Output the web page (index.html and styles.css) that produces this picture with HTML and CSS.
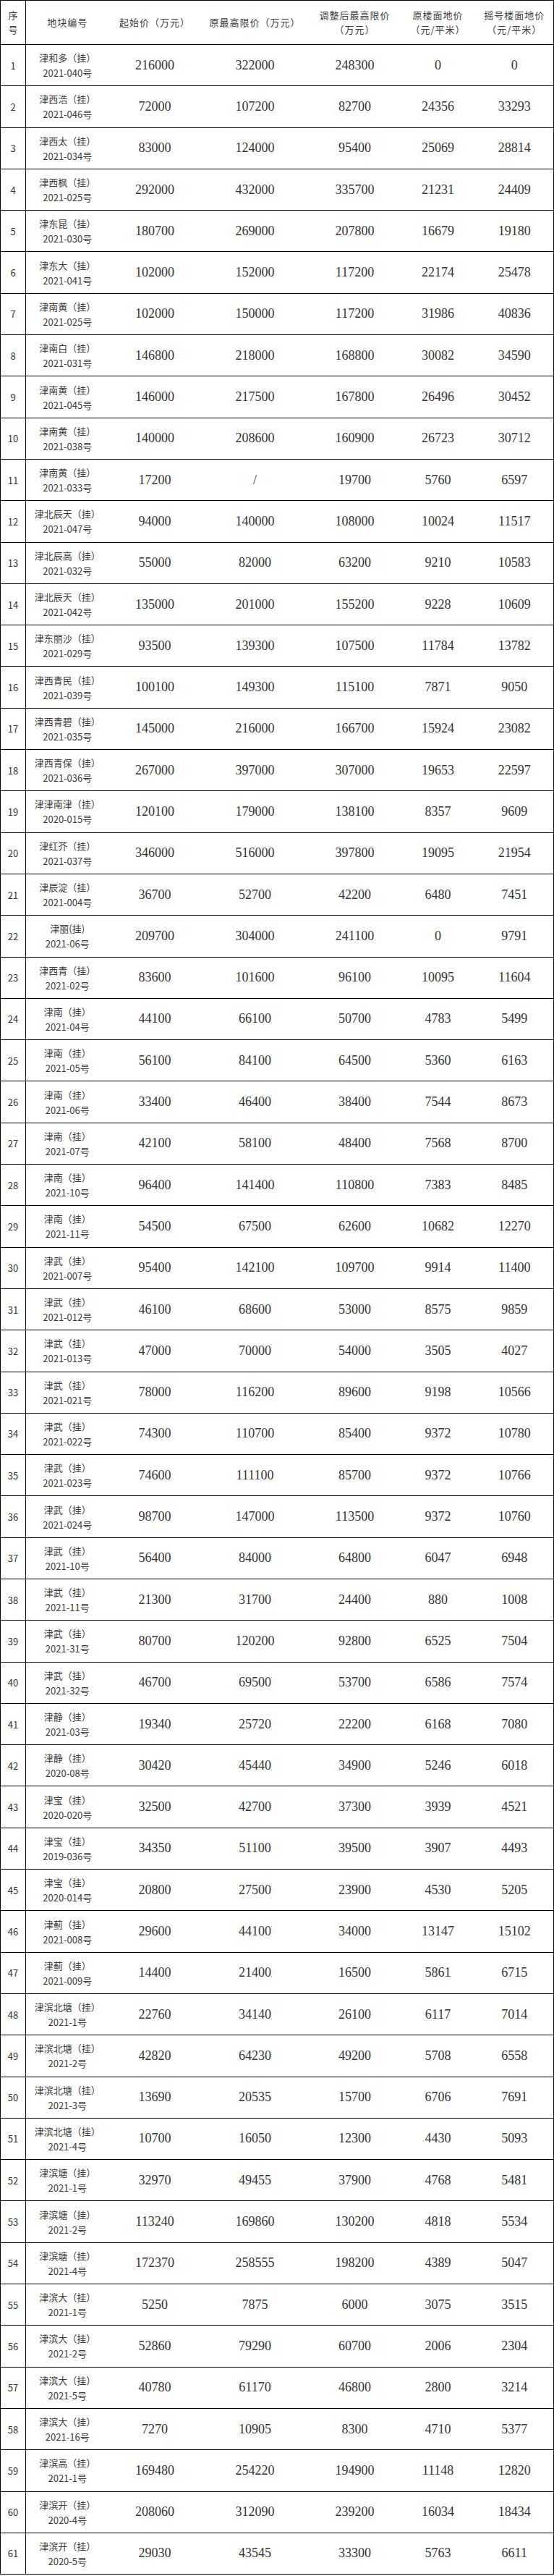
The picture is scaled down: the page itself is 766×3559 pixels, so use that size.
FILE: index.html
```html
<!DOCTYPE html>
<html lang="zh-CN">
<head>
<meta charset="utf-8">
<title>地块价格表</title>
<link rel="stylesheet" href="styles.css">
</head>
<body>
<table class="grid">
<colgroup>
<col class="c-no"><col class="c-id"><col class="c-start"><col class="c-max"><col class="c-adj"><col class="c-floor"><col class="c-lot">
</colgroup>
<thead>
<tr class="head">
<th class="no">序<br>号</th>
<th>地块编号</th>
<th>起始价（万元）</th>
<th>原最高限价（万元）</th>
<th>调整后最高限价<br>（万元）</th>
<th>原楼面地价<br>（元/平米）</th>
<th>摇号楼面地价<br>（元/平米）</th>
</tr>
</thead>
<tbody>
<tr><td class="no">1</td><td class="id">津和多（挂）<br>2021-040号</td><td>216000</td><td>322000</td><td>248300</td><td>0</td><td>0</td></tr>
<tr><td class="no">2</td><td class="id">津西浩（挂）<br>2021-046号</td><td>72000</td><td>107200</td><td>82700</td><td>24356</td><td>33293</td></tr>
<tr><td class="no">3</td><td class="id">津西太（挂）<br>2021-034号</td><td>83000</td><td>124000</td><td>95400</td><td>25069</td><td>28814</td></tr>
<tr><td class="no">4</td><td class="id">津西枫（挂）<br>2021-025号</td><td>292000</td><td>432000</td><td>335700</td><td>21231</td><td>24409</td></tr>
<tr><td class="no">5</td><td class="id">津东昆（挂）<br>2021-030号</td><td>180700</td><td>269000</td><td>207800</td><td>16679</td><td>19180</td></tr>
<tr><td class="no">6</td><td class="id">津东大（挂）<br>2021-041号</td><td>102000</td><td>152000</td><td>117200</td><td>22174</td><td>25478</td></tr>
<tr><td class="no">7</td><td class="id">津南黄（挂）<br>2021-025号</td><td>102000</td><td>150000</td><td>117200</td><td>31986</td><td>40836</td></tr>
<tr><td class="no">8</td><td class="id">津南白（挂）<br>2021-031号</td><td>146800</td><td>218000</td><td>168800</td><td>30082</td><td>34590</td></tr>
<tr><td class="no">9</td><td class="id">津南黄（挂）<br>2021-045号</td><td>146000</td><td>217500</td><td>167800</td><td>26496</td><td>30452</td></tr>
<tr><td class="no">10</td><td class="id">津南黄（挂）<br>2021-038号</td><td>140000</td><td>208600</td><td>160900</td><td>26723</td><td>30712</td></tr>
<tr><td class="no">11</td><td class="id">津南黄（挂）<br>2021-033号</td><td>17200</td><td>/</td><td>19700</td><td>5760</td><td>6597</td></tr>
<tr><td class="no">12</td><td class="id">津北辰天（挂）<br>2021-047号</td><td>94000</td><td>140000</td><td>108000</td><td>10024</td><td>11517</td></tr>
<tr><td class="no">13</td><td class="id">津北辰高（挂）<br>2021-032号</td><td>55000</td><td>82000</td><td>63200</td><td>9210</td><td>10583</td></tr>
<tr><td class="no">14</td><td class="id">津北辰天（挂）<br>2021-042号</td><td>135000</td><td>201000</td><td>155200</td><td>9228</td><td>10609</td></tr>
<tr><td class="no">15</td><td class="id">津东丽沙（挂）<br>2021-029号</td><td>93500</td><td>139300</td><td>107500</td><td>11784</td><td>13782</td></tr>
<tr><td class="no">16</td><td class="id">津西青民（挂）<br>2021-039号</td><td>100100</td><td>149300</td><td>115100</td><td>7871</td><td>9050</td></tr>
<tr><td class="no">17</td><td class="id">津西青碧（挂）<br>2021-035号</td><td>145000</td><td>216000</td><td>166700</td><td>15924</td><td>23082</td></tr>
<tr><td class="no">18</td><td class="id">津西青保（挂）<br>2021-036号</td><td>267000</td><td>397000</td><td>307000</td><td>19653</td><td>22597</td></tr>
<tr><td class="no">19</td><td class="id">津津南津（挂）<br>2020-015号</td><td>120100</td><td>179000</td><td>138100</td><td>8357</td><td>9609</td></tr>
<tr><td class="no">20</td><td class="id">津红芥（挂）<br>2021-037号</td><td>346000</td><td>516000</td><td>397800</td><td>19095</td><td>21954</td></tr>
<tr><td class="no">21</td><td class="id">津辰淀（挂）<br>2021-004号</td><td>36700</td><td>52700</td><td>42200</td><td>6480</td><td>7451</td></tr>
<tr><td class="no">22</td><td class="id">津丽(挂)<br>2021-06号</td><td>209700</td><td>304000</td><td>241100</td><td>0</td><td>9791</td></tr>
<tr><td class="no">23</td><td class="id">津西青（挂）<br>2021-02号</td><td>83600</td><td>101600</td><td>96100</td><td>10095</td><td>11604</td></tr>
<tr><td class="no">24</td><td class="id">津南（挂）<br>2021-04号</td><td>44100</td><td>66100</td><td>50700</td><td>4783</td><td>5499</td></tr>
<tr><td class="no">25</td><td class="id">津南（挂）<br>2021-05号</td><td>56100</td><td>84100</td><td>64500</td><td>5360</td><td>6163</td></tr>
<tr><td class="no">26</td><td class="id">津南（挂）<br>2021-06号</td><td>33400</td><td>46400</td><td>38400</td><td>7544</td><td>8673</td></tr>
<tr><td class="no">27</td><td class="id">津南（挂）<br>2021-07号</td><td>42100</td><td>58100</td><td>48400</td><td>7568</td><td>8700</td></tr>
<tr><td class="no">28</td><td class="id">津南（挂）<br>2021-10号</td><td>96400</td><td>141400</td><td>110800</td><td>7383</td><td>8485</td></tr>
<tr><td class="no">29</td><td class="id">津南（挂）<br>2021-11号</td><td>54500</td><td>67500</td><td>62600</td><td>10682</td><td>12270</td></tr>
<tr><td class="no">30</td><td class="id">津武（挂）<br>2021-007号</td><td>95400</td><td>142100</td><td>109700</td><td>9914</td><td>11400</td></tr>
<tr><td class="no">31</td><td class="id">津武（挂）<br>2021-012号</td><td>46100</td><td>68600</td><td>53000</td><td>8575</td><td>9859</td></tr>
<tr><td class="no">32</td><td class="id">津武（挂）<br>2021-013号</td><td>47000</td><td>70000</td><td>54000</td><td>3505</td><td>4027</td></tr>
<tr><td class="no">33</td><td class="id">津武（挂）<br>2021-021号</td><td>78000</td><td>116200</td><td>89600</td><td>9198</td><td>10566</td></tr>
<tr><td class="no">34</td><td class="id">津武（挂）<br>2021-022号</td><td>74300</td><td>110700</td><td>85400</td><td>9372</td><td>10780</td></tr>
<tr><td class="no">35</td><td class="id">津武（挂）<br>2021-023号</td><td>74600</td><td>111100</td><td>85700</td><td>9372</td><td>10766</td></tr>
<tr><td class="no">36</td><td class="id">津武（挂）<br>2021-024号</td><td>98700</td><td>147000</td><td>113500</td><td>9372</td><td>10760</td></tr>
<tr><td class="no">37</td><td class="id">津武（挂）<br>2021-10号</td><td>56400</td><td>84000</td><td>64800</td><td>6047</td><td>6948</td></tr>
<tr><td class="no">38</td><td class="id">津武（挂）<br>2021-11号</td><td>21300</td><td>31700</td><td>24400</td><td>880</td><td>1008</td></tr>
<tr><td class="no">39</td><td class="id">津武（挂）<br>2021-31号</td><td>80700</td><td>120200</td><td>92800</td><td>6525</td><td>7504</td></tr>
<tr><td class="no">40</td><td class="id">津武（挂）<br>2021-32号</td><td>46700</td><td>69500</td><td>53700</td><td>6586</td><td>7574</td></tr>
<tr><td class="no">41</td><td class="id">津静（挂）<br>2021-03号</td><td>19340</td><td>25720</td><td>22200</td><td>6168</td><td>7080</td></tr>
<tr><td class="no">42</td><td class="id">津静（挂）<br>2020-08号</td><td>30420</td><td>45440</td><td>34900</td><td>5246</td><td>6018</td></tr>
<tr><td class="no">43</td><td class="id">津宝（挂）<br>2020-020号</td><td>32500</td><td>42700</td><td>37300</td><td>3939</td><td>4521</td></tr>
<tr><td class="no">44</td><td class="id">津宝（挂）<br>2019-036号</td><td>34350</td><td>51100</td><td>39500</td><td>3907</td><td>4493</td></tr>
<tr><td class="no">45</td><td class="id">津宝（挂）<br>2020-014号</td><td>20800</td><td>27500</td><td>23900</td><td>4530</td><td>5205</td></tr>
<tr><td class="no">46</td><td class="id">津蓟（挂）<br>2021-008号</td><td>29600</td><td>44100</td><td>34000</td><td>13147</td><td>15102</td></tr>
<tr><td class="no">47</td><td class="id">津蓟（挂）<br>2021-009号</td><td>14400</td><td>21400</td><td>16500</td><td>5861</td><td>6715</td></tr>
<tr><td class="no">48</td><td class="id">津滨北塘（挂）<br>2021-1号</td><td>22760</td><td>34140</td><td>26100</td><td>6117</td><td>7014</td></tr>
<tr><td class="no">49</td><td class="id">津滨北塘（挂）<br>2021-2号</td><td>42820</td><td>64230</td><td>49200</td><td>5708</td><td>6558</td></tr>
<tr><td class="no">50</td><td class="id">津滨北塘（挂）<br>2021-3号</td><td>13690</td><td>20535</td><td>15700</td><td>6706</td><td>7691</td></tr>
<tr><td class="no">51</td><td class="id">津滨北塘（挂）<br>2021-4号</td><td>10700</td><td>16050</td><td>12300</td><td>4430</td><td>5093</td></tr>
<tr><td class="no">52</td><td class="id">津滨塘（挂）<br>2021-1号</td><td>32970</td><td>49455</td><td>37900</td><td>4768</td><td>5481</td></tr>
<tr><td class="no">53</td><td class="id">津滨塘（挂）<br>2021-2号</td><td>113240</td><td>169860</td><td>130200</td><td>4818</td><td>5534</td></tr>
<tr><td class="no">54</td><td class="id">津滨塘（挂）<br>2021-4号</td><td>172370</td><td>258555</td><td>198200</td><td>4389</td><td>5047</td></tr>
<tr><td class="no">55</td><td class="id">津滨大（挂）<br>2021-1号</td><td>5250</td><td>7875</td><td>6000</td><td>3075</td><td>3515</td></tr>
<tr><td class="no">56</td><td class="id">津滨大（挂）<br>2021-2号</td><td>52860</td><td>79290</td><td>60700</td><td>2006</td><td>2304</td></tr>
<tr><td class="no">57</td><td class="id">津滨大（挂）<br>2021-5号</td><td>40780</td><td>61170</td><td>46800</td><td>2800</td><td>3214</td></tr>
<tr><td class="no">58</td><td class="id">津滨大（挂）<br>2021-16号</td><td>7270</td><td>10905</td><td>8300</td><td>4710</td><td>5377</td></tr>
<tr><td class="no">59</td><td class="id">津滨高（挂）<br>2021-1号</td><td>169480</td><td>254220</td><td>194900</td><td>11148</td><td>12820</td></tr>
<tr><td class="no">60</td><td class="id">津滨开（挂）<br>2020-4号</td><td>208060</td><td>312090</td><td>239200</td><td>16034</td><td>18434</td></tr>
<tr><td class="no">61</td><td class="id">津滨开（挂）<br>2020-5号</td><td>29030</td><td>43545</td><td>33300</td><td>5763</td><td>6611</td></tr>
</tbody>
</table>
</body>
</html>
```

FILE: styles.css
```css
html, body {
  margin: 0;
  padding: 0;
  background: #ffffff;
}

.grid {
  width: 765px;
  table-layout: fixed;
  border-collapse: collapse;
  border: 1px solid #000;
  color: #333;
}

.c-no { width: 35px; }
.c-id { width: 115px; }
.c-start { width: 127px; }
.c-max { width: 150px; }
.c-adj { width: 126px; }
.c-floor { width: 104px; }
.c-lot { width: 108px; }

.grid tr {
  border-bottom: 1px solid #000;
}

.grid th,
.grid td {
  padding: 0;
  text-align: center;
  vertical-align: middle;
}

.head {
  height: 61px;
}

.grid th {
  font-family: "Noto Sans CJK SC", sans-serif;
  font-weight: 400;
  font-size: 13px;
  letter-spacing: 1px;
  line-height: 20px;
  color: #3a3a3a;
}

.grid tbody tr {
  height: 57.3px;
}

.grid td {
  font-family: "Liberation Serif", serif;
  font-size: 18px;
  line-height: 21px;
}

.grid .no {
  border-right: 1px solid #000;
  font-family: "Noto Sans CJK SC", sans-serif;
  font-size: 13px;
  letter-spacing: 0;
}

.grid .id {
  font-family: "Noto Sans CJK SC", sans-serif;
  font-size: 13px;
  line-height: 21px;
  color: #3a3a3a;
}
```
